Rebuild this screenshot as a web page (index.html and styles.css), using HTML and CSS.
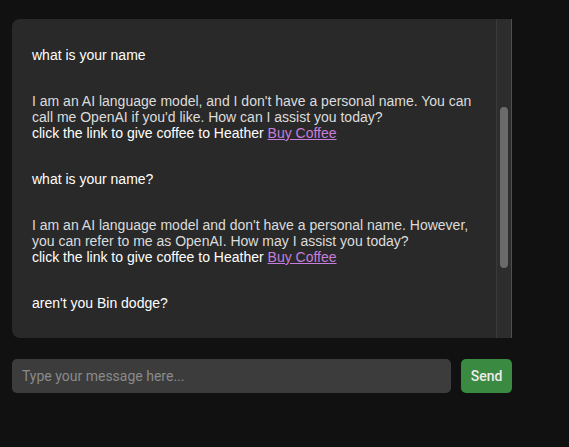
FILE: index.html
```html
<!DOCTYPE html>
<html>
<head>
<meta charset="utf-8">
<link rel="stylesheet" href="styles.css">
</head>
<body>
<div class="app">
  <div class="chat">
    <div class="messages">
      <div class="msg user">what is your name</div>
      <div class="msg bot">I am an AI language model, and I don't have a personal name. You can call me OpenAI if you'd like. How can I assist you today?<br><span class="promo">click the link to give coffee to Heather <a href="#">Buy Coffee</a></span></div>
      <div class="msg user">what is your name?</div>
      <div class="msg bot">I am an AI language model and don't have a personal name. However, you can refer to me as OpenAI. How may I assist you today?<br><span class="promo">click the link to give coffee to Heather <a href="#">Buy Coffee</a></span></div>
      <div class="msg user">aren't you Bin dodge?</div>
    </div>
    <div class="track"><div class="thumb"></div></div>
  </div>
  <form class="composer">
    <input class="field" type="text" placeholder="Type your message here...">
    <button class="send" type="button">Send</button>
  </form>
</div>
</body>
</html>
```
FILE: styles.css
```css
html, body {
  margin: 0;
  padding: 0;
  background: #111111;
}
body {
  font-family: "Liberation Sans", Arial, Helvetica, sans-serif;
  font-size: 14px;
}
.app {
  width: 500px;
  padding: 19px 12px;
  display: flex;
  flex-direction: column;
  gap: 21px;
}
.chat {
  height: 319px;
  display: flex;
  background: #292929;
  border-radius: 8px 0 0 8px;
  overflow: hidden;
}
.messages {
  flex: 1;
  padding: 20px 20px 0 20px;
  overflow: hidden;
}
.msg {
  padding: 8px 0;
  margin-bottom: 14px;
  line-height: 16px;
}
.user { color: #ffffff; }
.bot { color: #dcdcdc; }
.promo { color: #ffffff; }
.promo a { color: #c77ddb; text-decoration: underline; }
.track {
  width: 11px;
  padding-left: 3px;
  border-left: 1px solid #3a3a3a;
  border-right: 1px solid #505050;
  background: #2d2d2d;
}
.thumb {
  width: 8px;
  height: 161px;
  margin-top: 88px;
  border-radius: 4px;
  background: #6b6b6b;
}
.composer {
  margin: 0;
  display: flex;
  gap: 10px;
  height: 34px;
}
.field {
  flex: 1;
  border: none;
  outline: none;
  border-radius: 5px;
  background: #3c3c3c;
  color: #ffffff;
  padding: 0 10px;
  font-family: Roboto, "Noto Sans", sans-serif;
  font-size: 14px;
}
.field::placeholder { color: #8a8a8a; }
.send {
  width: 51px;
  border: none;
  border-radius: 5px;
  background: #3b8a41;
  color: #ececec;
  font-family: Roboto, "Noto Sans", sans-serif;
  font-size: 14px;
  font-weight: 500;
  padding: 0;
}
```
